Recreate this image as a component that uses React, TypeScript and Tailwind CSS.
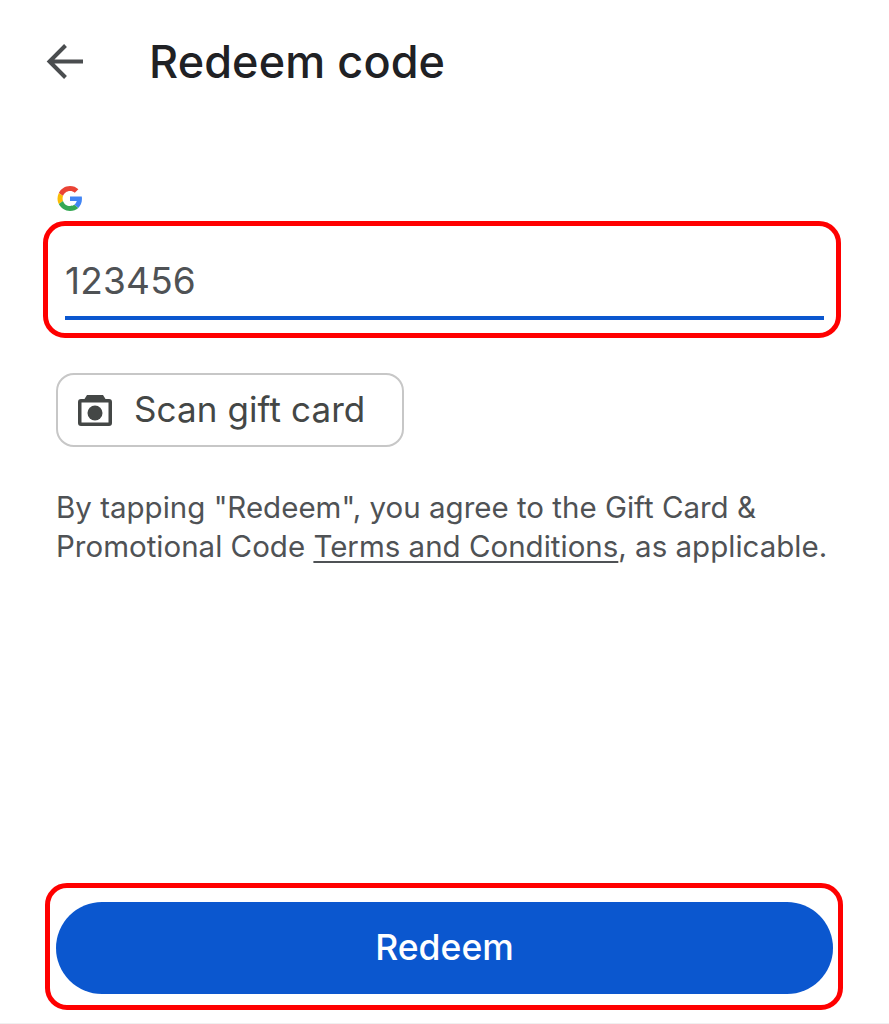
export default function App() {
  return (
    <div className="relative flex h-[1024px] w-[889px] flex-col overflow-hidden bg-white font-['Inter',sans-serif]">
      <header className="flex h-[50px] mt-[37px] items-center pl-[45px]">
        <svg width="40" height="40" viewBox="0 0 40 40" fill="none" className="shrink-0">
          <path d="M38 19.500H4.500M20.500 3.500L4.500 19.500l16 16" stroke="#4a4d4f" strokeWidth="4" />
        </svg>
        <h1 className="ml-[64px] text-[45px] leading-[50px] font-[450] tracking-[0.1px] text-[#202124]">Redeem code</h1>
      </header>
      <svg width="26" height="25" viewBox="0 0 48 48" className="ml-[57px] mt-[99px] shrink-0">
        <path fill="#EA4335" d="M24 9.500c3.540 0 6.710 1.220 9.210 3.600l6.850-6.850C35.900 2.380 30.470 0 24 0 14.620 0 6.510 5.380 2.560 13.220l7.980 6.190C12.430 13.720 17.740 9.500 24 9.500z" />
        <path fill="#4285F4" d="M46.980 24.550c0-1.570-.15-3.090-.38-4.550H24v9.020h12.940c-.58 2.960-2.260 5.480-4.780 7.180l7.730 6c4.510-4.180 7.090-10.360 7.090-17.650z" />
        <path fill="#FBBC05" d="M10.530 28.590c-.48-1.450-.76-2.990-.76-4.590s.27-3.140.76-4.590l-7.980-6.190C.92 16.460 0 20.120 0 24c0 3.880.92 7.540 2.560 10.780l7.970-6.190z" />
        <path fill="#34A853" d="M24 48c6.480 0 11.930-2.130 15.890-5.810l-7.730-6c-2.150 1.450-4.920 2.300-8.160 2.300-6.260 0-11.570-4.220-13.470-9.910l-7.980 6.190C6.510 42.620 14.620 48 24 48z" />
      </svg>
      <section className="ml-[43px] mt-[10px] flex h-[117px] w-[798px] shrink-0 flex-col rounded-[22px] border-[5px] border-[#ff0000] pl-[17px] pr-[12px]">
        <div className="mt-[30px] flex h-[50px] items-center text-[37px] leading-[50px] tracking-[0.2px] text-[#4f5255]">123456</div>
        <div className="mt-[10px] h-[4px] w-full bg-[#0b57cf]" />
      </section>
      <button className="ml-[56px] mt-[35px] flex h-[74px] w-[348px] shrink-0 items-center rounded-[18px] border-2 border-[#c7c7c7] bg-white pl-[20px]">
        <svg width="34" height="31" viewBox="0 0 34 31" className="shrink-0">
          <path fillRule="evenodd" fill="#444746" d="M9 0h16l2.500 4H31a3 3 0 0 1 3 3v21a3 3 0 0 1-3 3H3a3 3 0 0 1-3-3V7a3 3 0 0 1 3-3h3.500zM3.500 7.500v20h27v-20z" />
          <circle cx="17" cy="18" r="7.500" fill="#444746" />
        </svg>
        <span className="ml-[22px] -translate-y-px text-[35px] leading-[44px] tracking-[0.1px] text-[#444746]">Scan gift card</span>
      </button>
      <p className="ml-[56px] mt-[41px] text-[29.500px] leading-[39px] text-[#4f5255] whitespace-nowrap">
        By tapping "Redeem", you agree to the Gift Card &amp;
        <br />
        Promotional Code <span className="underline decoration-2 underline-offset-4">Terms and Conditions</span>, as applicable.
      </p>
      <section className="ml-[45px] mt-auto mb-[13px] flex h-[127px] w-[798px] shrink-0 items-start rounded-[22px] border-[5px] border-[#ff0000] pl-[6px] pt-[14px]">
        <button className="flex h-[92px] w-[777px] items-center justify-center rounded-full bg-[#0b57cf] text-[35.500px] font-medium text-white">Redeem</button>
      </section>
      <div className="h-px shrink-0 bg-[#f0f0f0]" />
    </div>
  );
}
